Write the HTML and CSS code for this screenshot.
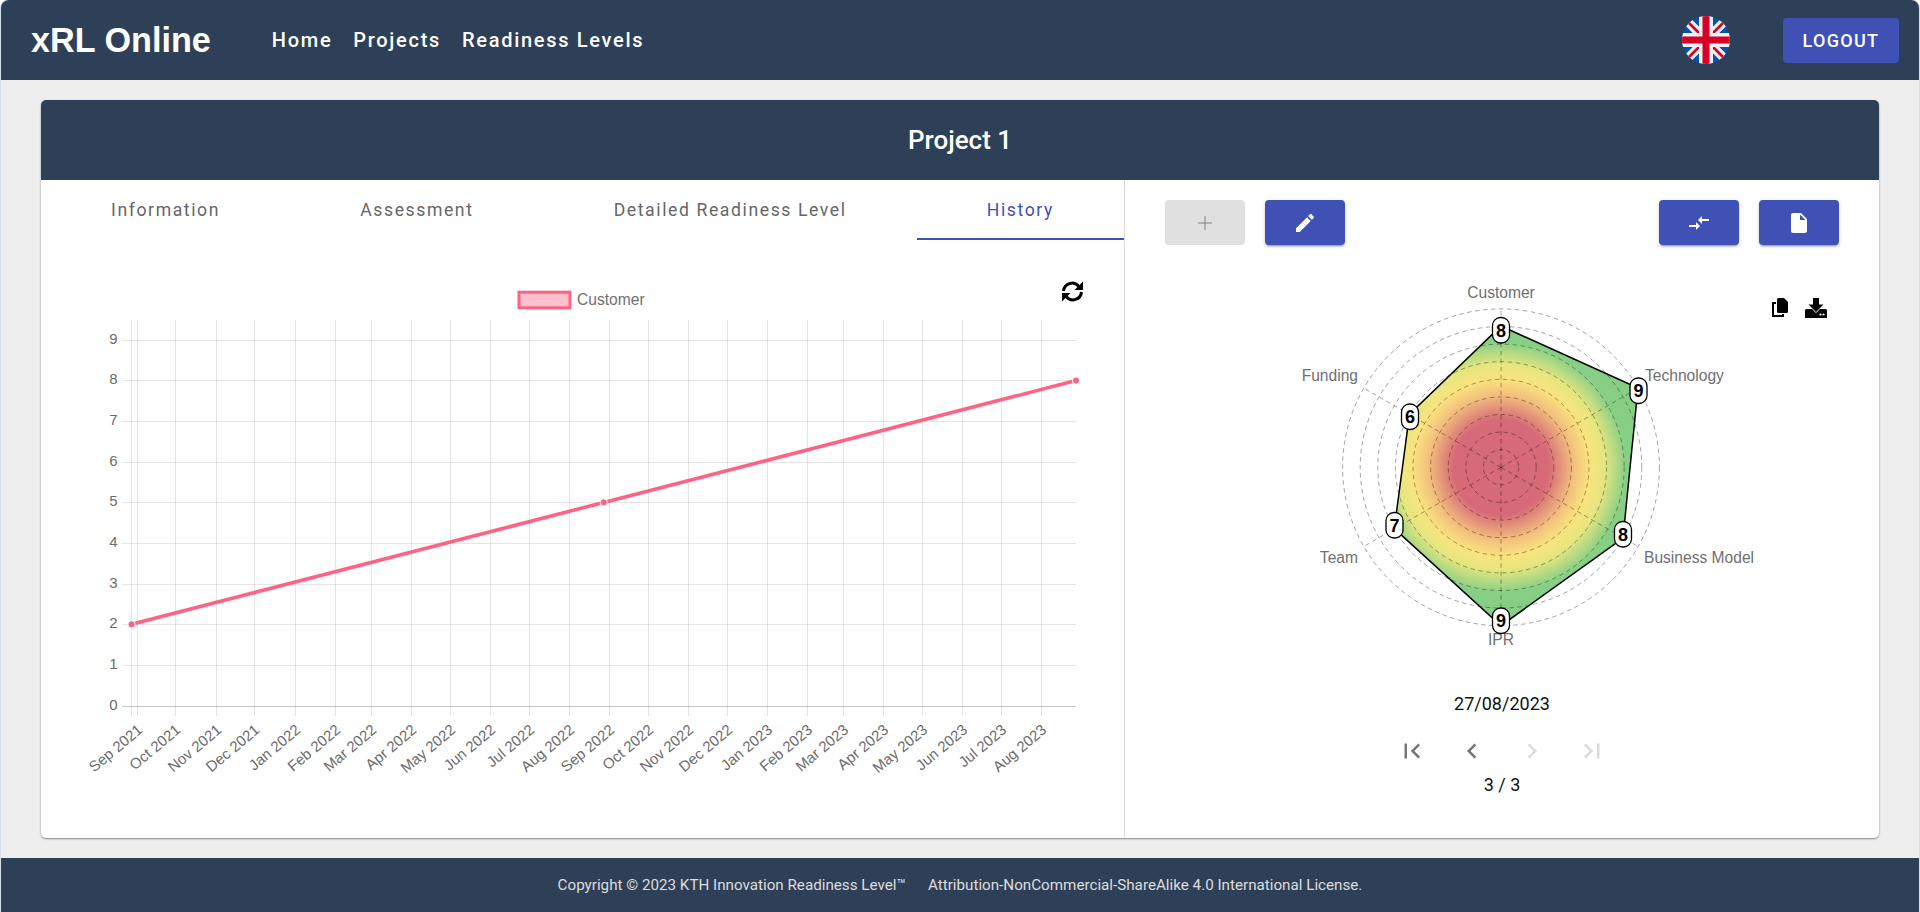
FILE: index.html
```html
<!DOCTYPE html>
<html lang="en">
<head>
<meta charset="utf-8">
<title>xRL Online</title>
<link rel="stylesheet" href="styles.css">
</head>
<body>
<div class="window">
  <header class="topbar">
    <div class="brand">xRL Online</div>
    <nav class="nav">
      <a class="nav-link">Home</a>
      <a class="nav-link">Projects</a>
      <a class="nav-link">Readiness Levels</a>
    </nav>
    <svg class="flag" viewBox="0 0 48 48" width="48" height="48" aria-label="English">
      <defs><clipPath id="flagclip"><circle cx="24" cy="24" r="24"/></clipPath></defs>
      <g clip-path="url(#flagclip)">
        <rect width="48" height="48" fill="#0052b4"/>
        <path d="M0 0L48 48M48 0L0 48" stroke="#f0f0f0" stroke-width="9"/>
        <path d="M4 4L20 20M44 4L29 19M44 44L28 28M4 44L19 29" stroke="#d80027" stroke-width="2.6"/>
        <path d="M24 0V48M0 24H48" stroke="#f0f0f0" stroke-width="14"/>
        <path d="M24 0V48M0 24H48" stroke="#d80027" stroke-width="7"/>
      </g>
    </svg>
    <button class="logout">LOGOUT</button>
  </header>

  <main class="content">
    <section class="card">
      <div class="card-head">Project 1</div>
      <div class="card-body">
        <div class="left">
          <div class="tabs">
            <div class="tab">Information</div>
            <div class="tab">Assessment</div>
            <div class="tab">Detailed Readiness Level</div>
            <div class="tab active">History</div>
          </div>
          <div class="line-wrap">
            <svg class="refresh" viewBox="0 0 23 21" width="23" height="21">
              <path d="M2.5 10A8.6 8.6 0 0 1 17.6 5.2" fill="none" stroke="#000" stroke-width="3"/>
              <path d="M22 .5L22 9L13.5 9z" fill="#000"/>
              <path d="M20.5 11A8.6 8.6 0 0 1 5.4 15.8" fill="none" stroke="#000" stroke-width="3"/>
              <path d="M1 20.5L1 12L9.5 12z" fill="#000"/>
            </svg>
            <svg class="line-chart" viewBox="41 240 1083 538" width="1083" height="538">
              <rect x="519" y="292.2" width="51" height="15.6" fill="rgba(255,99,132,.4)" stroke="#ff6384" stroke-width="3"/>
              <text class="lbl" x="577" y="304.5">Customer</text>

              <g class="grid">
                <path d="M122 340.5H1076M122 380.5H1076M122 421.5H1076M122 462.5H1076M122 502.5H1076M122 543.5H1076M122 584.5H1076M122 624.5H1076M122 665.5H1076"/>
                <path d="M131.5 320V716M137.5 320V716M175.5 320V716M216.5 320V716M254.5 320V716M295.5 320V716M335.5 320V716M371.5 320V716M411.5 320V716M450.5 320V716M490.5 320V716M529.5 320V716M569.5 320V716M609.5 320V716M648.5 320V716M688.5 320V716M727.5 320V716M767.5 320V716M807.5 320V716M843.5 320V716M883.5 320V716M922.5 320V716M962.5 320V716M1001.5 320V716M1041.5 320V716"/>
              </g>
              <path class="zero" d="M122 706.5H1076"/>

              <g class="tick" text-anchor="end">
                <text x="117.5" y="344">9</text>
                <text x="117.5" y="384">8</text>
                <text x="117.5" y="425">7</text>
                <text x="117.5" y="466">6</text>
                <text x="117.5" y="506">5</text>
                <text x="117.5" y="547">4</text>
                <text x="117.5" y="588">3</text>
                <text x="117.5" y="628">2</text>
                <text x="117.5" y="669">1</text>
                <text x="117.5" y="710">0</text>
                <text transform="translate(143.5 731.5) rotate(-40)">Sep 2021</text>
                <text transform="translate(181.5 731.5) rotate(-40)">Oct 2021</text>
                <text transform="translate(222.5 731.5) rotate(-40)">Nov 2021</text>
                <text transform="translate(260.5 731.5) rotate(-40)">Dec 2021</text>
                <text transform="translate(301.5 731.5) rotate(-40)">Jan 2022</text>
                <text transform="translate(341.5 731.5) rotate(-40)">Feb 2022</text>
                <text transform="translate(377.5 731.5) rotate(-40)">Mar 2022</text>
                <text transform="translate(417.5 731.5) rotate(-40)">Apr 2022</text>
                <text transform="translate(456.5 731.5) rotate(-40)">May 2022</text>
                <text transform="translate(496.5 731.5) rotate(-40)">Jun 2022</text>
                <text transform="translate(535.5 731.5) rotate(-40)">Jul 2022</text>
                <text transform="translate(575.5 731.5) rotate(-40)">Aug 2022</text>
                <text transform="translate(615.5 731.5) rotate(-40)">Sep 2022</text>
                <text transform="translate(654.5 731.5) rotate(-40)">Oct 2022</text>
                <text transform="translate(694.5 731.5) rotate(-40)">Nov 2022</text>
                <text transform="translate(733.5 731.5) rotate(-40)">Dec 2022</text>
                <text transform="translate(773.5 731.5) rotate(-40)">Jan 2023</text>
                <text transform="translate(813.5 731.5) rotate(-40)">Feb 2023</text>
                <text transform="translate(849.5 731.5) rotate(-40)">Mar 2023</text>
                <text transform="translate(889.5 731.5) rotate(-40)">Apr 2023</text>
                <text transform="translate(928.5 731.5) rotate(-40)">May 2023</text>
                <text transform="translate(968.5 731.5) rotate(-40)">Jun 2023</text>
                <text transform="translate(1007.5 731.5) rotate(-40)">Jul 2023</text>
                <text transform="translate(1047.5 731.5) rotate(-40)">Aug 2023</text>
              </g>

              <path d="M131.5 624.3L603.7 502.4L1076 380.5" fill="none" stroke="#ff6384" stroke-width="3.6"/>
              <circle cx="131.5" cy="624.3" r="3.6" fill="#ff6384" stroke="#fff"/>
              <circle cx="603.7" cy="502.4" r="3.6" fill="#ff6384" stroke="#fff"/>
              <circle cx="1076" cy="380.5" r="3.6" fill="#ff6384" stroke="#fff"/>
            </svg>
          </div>
        </div>

        <div class="right">
          <div class="toolbar">
            <div class="tool-group">
              <button class="tool disabled">
                <svg viewBox="0 0 24 24" width="24" height="24"><path d="M5 11.5h14v1H5zM11.5 5h1v14h-1z"/></svg>
              </button>
              <button class="tool">
                <svg viewBox="0 0 24 24" width="24" height="24"><path d="M3 17.25V21h3.75L17.81 9.94l-3.75-3.75L3 17.25zM20.71 7.04c.39-.39.39-1.02 0-1.41l-2.34-2.34c-.39-.39-1.02-.39-1.41 0l-1.83 1.83 3.75 3.75 1.83-1.83z"/></svg>
              </button>
            </div>
            <div class="tool-group">
              <button class="tool">
                <svg viewBox="0 0 24 24" width="24" height="24"><path d="M9.01 14H2v2h7.01v3L13 15l-3.99-4v3zm5.98-1v-3H22V8h-7.01V5L11 9l3.99 4z"/></svg>
              </button>
              <button class="tool">
                <svg viewBox="0 0 24 24" width="24" height="24"><path d="M6 2c-1.1 0-1.99.9-1.99 2L4 20c0 1.1.89 2 1.99 2H18c1.1 0 2-.9 2-2V8l-6-6H6zm7 7V3.5L18.5 9H13z"/></svg>
              </button>
            </div>
          </div>

          <div class="radar-wrap">
            <svg class="icon-copy" viewBox="0 0 16 19" width="16" height="19">
              <path d="M4 5H1v13h10v-2" fill="none" stroke="#000" stroke-width="2"/>
              <path d="M6.5 0H12l4 4v9.5a1.5 1.5 0 0 1-1.500 1.500H6.500A1.500 1.500 0 0 1 5 13.500V1.500A1.500 1.500 0 0 1 6.500 0z" fill="#000"/>
            </svg>
            <svg class="icon-save" viewBox="0 0 22 20" width="22" height="20">
              <path d="M1.500 11H20.500A1.500 1.500 0 0 1 22 12.500V20H0V12.500A1.500 1.500 0 0 1 1.500 11z" fill="#000"/>
              <path d="M8 0h6v6.500h4.500L11 14 3.500 6.500H8z" fill="#000" stroke="#fff" stroke-width="1.500" paint-order="stroke"/>
              <circle cx="15.500" cy="16.500" r="1.100" fill="#fff"/>
              <circle cx="18.500" cy="16.500" r="1.100" fill="#fff"/>
            </svg>
            <svg class="radar" viewBox="1125 270 754 410" width="754" height="410">
              <defs>
                <radialGradient id="heat" gradientUnits="userSpaceOnUse" cx="1501" cy="467.300" r="158.400">
                  <stop offset="0" stop-color="#d66a78"/>
                  <stop offset=".3" stop-color="#d66a78"/>
                  <stop offset=".46" stop-color="#f2c07c"/>
                  <stop offset=".56" stop-color="#fae37e"/>
                  <stop offset=".65" stop-color="#e6e67e"/>
                  <stop offset=".79" stop-color="#88cf86"/>
                  <stop offset="1" stop-color="#86cd84"/>
                </radialGradient>
              </defs>
              <polygon points="1501,326 1638,388 1623,538 1501,625.700 1394.300,528.600 1409.500,414.200" fill="url(#heat)"/>
              <g class="rings">
                <circle cx="1501" cy="467.300" r="17.600"/>
                <circle cx="1501" cy="467.300" r="35.200"/>
                <circle cx="1501" cy="467.300" r="52.800"/>
                <circle cx="1501" cy="467.300" r="70.400"/>
                <circle cx="1501" cy="467.300" r="88"/>
                <circle cx="1501" cy="467.300" r="105.600"/>
                <circle cx="1501" cy="467.300" r="123.200"/>
                <circle cx="1501" cy="467.300" r="140.800"/>
                <circle cx="1501" cy="467.300" r="158.400"/>
                <path d="M1501 467.300V308.900M1501 467.300V625.700M1501 467.300L1638.200 388.100M1501 467.300L1638.200 546.500M1501 467.300L1363.800 388.100M1501 467.300L1363.800 546.500"/>
              </g>
              <polygon points="1501,326 1638,388 1623,538 1501,625.700 1394.300,528.600 1409.500,414.200" fill="none" stroke="#000" stroke-width="1.500"/>

              <text class="lbl" x="1501" y="298" text-anchor="middle">Customer</text>
              <text class="lbl" x="1645" y="380.500">Technology</text>
              <text class="lbl" x="1358" y="380.500" text-anchor="end">Funding</text>
              <text class="lbl" x="1358" y="562.500" text-anchor="end">Team</text>
              <text class="lbl" x="1644" y="562.500">Business Model</text>
              <text class="lbl" x="1501" y="644.500" text-anchor="middle">IPR</text>

              <g class="val-box">
                <rect x="1492.500" y="317.500" width="17" height="25.500" rx="8"/>
                <rect x="1630" y="378" width="17" height="25.500" rx="8"/>
                <rect x="1614.500" y="521.500" width="17" height="25.500" rx="8"/>
                <rect x="1492.500" y="608" width="17" height="25.500" rx="8"/>
                <rect x="1386" y="512.500" width="17" height="25.500" rx="8"/>
                <rect x="1401.500" y="404" width="17" height="25.500" rx="8"/>
              </g>
              <g class="val" text-anchor="middle">
                <text x="1501" y="336.500">8</text>
                <text x="1638.500" y="397">9</text>
                <text x="1623" y="540.500">8</text>
                <text x="1501" y="627">9</text>
                <text x="1394.500" y="531.500">7</text>
                <text x="1410" y="423">6</text>
              </g>
            </svg>
          </div>

          <div class="date">27/08/2023</div>
          <div class="pager">
            <svg class="pg" viewBox="0 0 24 24" width="30" height="30"><path d="M18.410 16.590L13.820 12l4.590-4.590L17 6l-6 6 6 6zM6 6h2v12H6z"/></svg>
            <svg class="pg" viewBox="0 0 24 24" width="30" height="30"><path d="M15.410 7.410L14 6l-6 6 6 6 1.410-1.410L10.830 12z"/></svg>
            <svg class="pg off" viewBox="0 0 24 24" width="30" height="30"><path d="M10 6L8.590 7.410 13.170 12l-4.580 4.590L10 18l6-6z"/></svg>
            <svg class="pg off" viewBox="0 0 24 24" width="30" height="30"><path d="M5.590 7.410L10.180 12l-4.590 4.590L7 18l6-6-6-6zM16 6h2v12h-2z"/></svg>
          </div>
          <div class="count">3 / 3</div>
        </div>
      </div>
    </section>
  </main>

  <footer class="footer">
    <span>Copyright © 2023 KTH Innovation Readiness Level™</span>
    <span>Attribution-NonCommercial-ShareAlike 4.0 International License.</span>
  </footer>
</div>
</body>
</html>
```

FILE: styles.css
```css
* { box-sizing: border-box; }
html, body { margin: 0; height: 100%; overflow: hidden; }
body {
  background: #fff;
  font-family: Roboto, "Liberation Sans", sans-serif;
}
.window {
  display: flex;
  flex-direction: column;
  height: 912px;
  background: #eee;
  border-left: 1px solid #d3e0ea;
  border-right: 1px solid #d3e0ea;
  border-radius: 8px 8px 0 0;
}
.topbar {
  display: flex;
  align-items: center;
  height: 80px;
  flex: none;
  padding: 0 20px 0 30px;
  background: #2e4057;
  border-radius: 8px 8px 0 0;
  color: #fff;
}
.brand {
  font: 700 34.2px "Liberation Sans", Arial, sans-serif;
  line-height: 1;
  margin-right: 61px;
}
.nav { display: flex; gap: 21px; }
.nav-link {
  font-size: 20px;
  font-weight: 500;
  letter-spacing: 1.7px;
}
.flag { margin-left: auto; margin-right: 53px; }
.logout {
  width: 116px;
  height: 45px;
  border: 0;
  border-radius: 4px;
  background: #3f51b5;
  color: #fff;
  font: 500 18px Roboto, sans-serif;
  letter-spacing: 1.3px;
}
.content {
  flex: 1;
  min-height: 0;
  padding: 20px 40px;
}
.card {
  display: flex;
  flex-direction: column;
  height: 100%;
  background: #fff;
  border-radius: 5px;
  overflow: hidden;
  box-shadow: 0 1px 2px rgba(0,0,0,.45);
}
.card-head {
  flex: none;
  height: 80px;
  display: flex;
  align-items: center;
  justify-content: center;
  background: #2e4057;
  color: #fff;
  font-size: 26px;
  font-weight: 500;
}
.card-body { flex: 1; display: flex; min-height: 0; }
.left { width: 1083px; flex: none; display: flex; flex-direction: column; }
.tabs { display: flex; height: 60px; flex: none; }
.tab {
  flex: 1 1 auto;
  text-align: center;
  padding-top: 18px;
  font-size: 17.6px;
  line-height: 24px;
  letter-spacing: 1.6px;
  color: #666;
  border-bottom: 2px solid transparent;
}
.tab.active {
  color: #3f51b5;
  border-bottom-color: #3f51b5;
}
.line-wrap { position: relative; flex: 1; min-height: 0; }
.line-chart { display: block; }
.refresh { position: absolute; left: 1020px; top: 41px; z-index: 1; }
.grid path { stroke: rgba(0,0,0,.1); stroke-width: 1; fill: none; }
.zero { stroke: rgba(0,0,0,.22); stroke-width: 1; fill: none; }
.tick text { font: 15px "Liberation Sans", Arial, sans-serif; fill: #6c6c6c; }
.lbl { font: 15.6px "Liberation Sans", Arial, sans-serif; fill: #707070; }

.right {
  flex: 1;
  min-width: 0;
  display: flex;
  flex-direction: column;
  border-left: 1px solid #ddd;
}
.toolbar {
  flex: none;
  display: flex;
  justify-content: space-between;
  height: 90px;
  padding: 20px 40px 25px;
}
.tool-group { display: flex; gap: 20px; }
.tool {
  width: 80px;
  height: 45px;
  border: 0;
  padding: 0;
  display: flex;
  align-items: center;
  justify-content: center;
  border-radius: 4px;
  background: #3f51b5;
  box-shadow: 0 3px 1px -2px rgba(0,0,0,.2), 0 2px 2px rgba(0,0,0,.14), 0 1px 5px rgba(0,0,0,.12);
}
.tool svg { fill: #fff; }
.tool.disabled { background: #e0e0e0; box-shadow: none; }
.tool.disabled svg { fill: #808080; }
.radar-wrap { position: relative; flex: none; height: 410px; }
.radar { display: block; }
.icon-copy { position: absolute; left: 647px; top: 28px; }
.icon-save { position: absolute; left: 680px; top: 28px; }
.rings circle, .rings path {
  fill: none;
  stroke: rgba(0,0,0,.36);
  stroke-width: 1;
  stroke-dasharray: 4.5 3.5;
}
.val-box rect { fill: #fff; stroke: #000; stroke-width: 1.300; }
.val text { font: 700 18px "Liberation Sans", Arial, sans-serif; fill: #000; }
.date {
  flex: none;
  height: 48px;
  line-height: 48px;
  text-align: center;
  font-size: 18px;
  color: #111;
}
.pager {
  flex: none;
  display: flex;
  justify-content: center;
  gap: 30px;
  margin-top: 8px;
  height: 30px;
}
.pg { fill: rgba(0,0,0,.54); }
.pg.off { fill: rgba(0,0,0,.14); }
.count {
  flex: none;
  height: 38px;
  line-height: 38px;
  text-align: center;
  font-size: 18px;
  color: #111;
}
.footer {
  flex: none;
  height: 54px;
  display: flex;
  align-items: center;
  justify-content: center;
  gap: 22px;
  background: #2e4057;
  color: #ddd;
  font-size: 15.2px;
}
```
